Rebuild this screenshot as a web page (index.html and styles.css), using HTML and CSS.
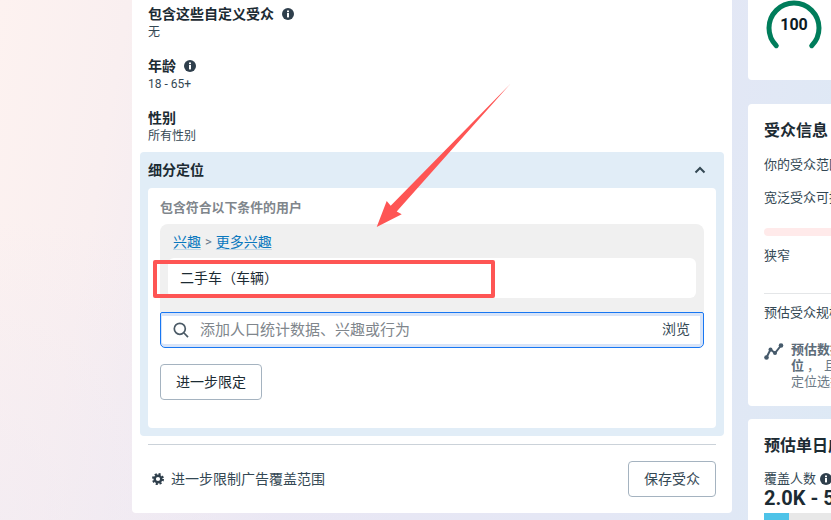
FILE: index.html
```html
<!DOCTYPE html>
<html lang="zh">
<head>
<meta charset="utf-8">
<title>受众</title>
<link rel="stylesheet" href="styles.css">
</head>
<body>
<div class="page">
  <main class="left-card">
    <div class="field">
      <div class="field-title">包含这些自定义受众
        <svg class="info" viewBox="0 0 12 12"><circle cx="6" cy="6" r="6"/><rect class="info-i" x="5" y="5" width="2" height="4.4"/><rect class="info-i" x="5" y="2.5" width="2" height="1.7"/></svg>
      </div>
      <div class="field-value">无</div>
    </div>
    <div class="field">
      <div class="field-title">年龄
        <svg class="info" viewBox="0 0 12 12"><circle cx="6" cy="6" r="6"/><rect class="info-i" x="5" y="5" width="2" height="4.4"/><rect class="info-i" x="5" y="2.5" width="2" height="1.7"/></svg>
      </div>
      <div class="field-value">18 - 65+</div>
    </div>
    <div class="field">
      <div class="field-title">性别</div>
      <div class="field-value">所有性别</div>
    </div>

    <section class="targeting">
      <header class="targeting-head">
        <span class="targeting-name">细分定位</span>
        <svg class="chevron" viewBox="0 0 12 8"><path d="M1.5 6.5 6 2l4.500 4.500"/></svg>
      </header>
      <div class="targeting-body">
        <div class="targeting-label">包含符合以下条件的用户</div>
        <div class="group">
          <div class="crumb"><a>兴趣</a><span class="crumb-sep">&gt;</span><a>更多兴趣</a></div>
          <div class="tag">二手车（车辆）</div>
        </div>
        <div class="search">
          <svg class="search-icon" viewBox="0 0 16 16"><circle cx="6.800" cy="6.800" r="5.500"/><path d="M11 11l4 4.200"/></svg>
          <span class="search-text">添加人口统计数据、兴趣或行为</span>
          <span class="browse">浏览</span>
        </div>
        <button class="btn narrow-btn">进一步限定</button>
      </div>
    </section>

    <div class="divider"></div>
    <footer class="left-foot">
      <div class="limit">
        <svg class="gear" viewBox="0 0 12 12"><circle cx="6" cy="6" r="3.300"/><circle class="gear-teeth" cx="6" cy="6" r="5"/></svg>
        <span>进一步限制广告覆盖范围</span>
      </div>
      <button class="btn save-btn">保存受众</button>
    </footer>
  </main>

  <aside class="right-col">
    <section class="card gauge-card">
      <div class="gauge">
        <svg viewBox="0 0 56 50"><path d="M10.300 45.700A25 25 0 1 1 45.700 45.700"/></svg>
        <span class="gauge-num">100</span>
      </div>
    </section>
    <section class="card info-card">
      <h2 class="card-title">受众信息</h2>
      <p class="line line-a">你的受众范围很宽泛</p>
      <p class="line line-b">宽泛受众可接触更多用户</p>
      <div class="meter"></div>
      <p class="line line-c">狭窄</p>
      <div class="card-rule"></div>
      <p class="line line-d">预估受众规模</p>
      <div class="note">
        <svg class="trend" viewBox="0 0 20 18"><path d="M2.500 14.500 6.500 6.500 11 10 17 2.500"/><circle cx="2.500" cy="14.500" r="2.300"/><circle cx="6.500" cy="6.500" r="2"/><circle cx="11" cy="10" r="2"/><circle cx="17" cy="2.500" r="2.300"/></svg>
        <div class="note-text"><b>预估数据</b><br><b>位</b><span class="note-comma">，</span>且可能<br>定位选择</div>
      </div>
    </section>
    <section class="card reach-card">
      <h2 class="card-title">预估单日成效</h2>
      <div class="reach-label">覆盖人数
        <svg class="info info-small" viewBox="0 0 12 12"><circle cx="6" cy="6" r="6"/><rect class="info-i" x="5" y="5" width="2" height="4.400"/><rect class="info-i" x="5" y="2.500" width="2" height="1.700"/></svg>
      </div>
      <div class="reach-num">2.0K - 5.8K</div>
      <div class="reach-bar"><div class="reach-fill"></div></div>
    </section>
  </aside>
</div>

<div class="red-box"></div>
<svg class="arrow" viewBox="0 0 831 520"><polygon points="510.300,84 396.700,211.400 401.700,214.300 376.700,226.900 386.700,201 390.700,205.800"/></svg>
</body>
</html>
```
FILE: styles.css
```css
* { box-sizing: border-box; }
html, body { margin: 0; padding: 0; height: 100%; overflow: hidden; }
body {
  font-family: Roboto, "Noto Sans CJK SC", sans-serif;
  color: #1c2b33;
  background:
    radial-gradient(420px 300px at 0 520px, rgba(236,232,244,.45), rgba(236,232,244,0)),
    linear-gradient(100deg, #fdf2f0 0%, #f9eff0 14%, #e9e7f4 40%, #e4e7f5 75%, #dde9f5 100%);
  position: relative;
}
.page { display: flex; gap: 16px; width: 831px; height: 520px; padding-left: 132px; overflow: hidden; align-items: flex-start; }

.left-card { flex: none; width: 600px; height: 513px; background: #fff; border-radius: 0 0 4px 4px; padding-top: 5px; }
.field { padding: 0 16px; margin-bottom: 18px; }
.field:nth-child(3) { margin-bottom: 9px; }
.field-title { font-size: 14px; font-weight: 700; line-height: 18px; display: flex; align-items: center; gap: 8px; }
.field-value { font-size: 12px; line-height: 16px; padding-top: 1px; height: 16px; color: #344854; }
.info { width: 12px; height: 12px; flex: none; fill: #2f3f4c; }
.info-i { fill: #fff; }

.targeting { margin: 0 8px; background: #e1edf7; border-radius: 4px; padding: 0 8px 8px; }
.targeting-head { height: 36px; display: flex; align-items: center; justify-content: space-between; font-size: 14px; font-weight: 700; }
.targeting-name { padding-bottom: 2px; }
.chevron { width: 12px; height: 8px; margin-right: 10px; fill: none; stroke: #344854; stroke-width: 2; }
.targeting-body { background: #fff; border-radius: 4px; height: 240px; padding: 11px 12px 0; }
.targeting-label { font-size: 12.900px; font-weight: 700; line-height: 18px; color: #80868c; margin-bottom: 7px; }
.group { background: #f0f0f0; border-radius: 8px 8px 0 0; height: 88px; }
.crumb { height: 34px; padding-left: 13px; display: flex; align-items: center; gap: 4px; font-size: 14px; color: #0a78be; }
.crumb a { text-decoration: underline; text-decoration-thickness: 1px; text-underline-offset: 2px; text-decoration-color: rgba(10,120,190,.2); }
.crumb-sep { color: #67788a; font-size: 13px; }
.tag { height: 40px; margin: 0 8px; background: #fff; border-radius: 6px; padding: 0 0 3px 12px; display: flex; align-items: center; font-size: 14px; }

.search { height: 36px; border: 1px solid #1877f2; border-radius: 2px 2px 5px 5px; box-shadow: inset 0 3px 0 #d8e4f8, inset 0 -3px 0 #d8e4f8, inset -3px 0 0 #d8e4f8, inset 1px 0 0 #d8e4f8; display: flex; align-items: center; padding: 0 12px; background: #fff; }
.search-icon { width: 16px; height: 16px; flex: none; fill: none; stroke: #4b5a66; stroke-width: 1.700; margin-right: 11px; }
.search-text { flex: 1; font-size: 15px; color: #80868c; padding-bottom: 4px; }
.browse { font-size: 14px; color: #344854; padding-bottom: 4px; margin-right: 1px; }

.btn { display: block; background: #fff; border: 1px solid #a5b3c0; border-radius: 4px; height: 36px; padding: 0 0 2px; font: inherit; font-size: 14px; color: #1c2b33; }
.narrow-btn { width: 102px; margin-top: 16px; }
.save-btn { width: 88px; color: #344854; }

.divider { height: 1px; background: #cbd2d9; margin: 8px 16px 16px; }
.left-foot { display: flex; justify-content: space-between; align-items: center; padding: 0 16px 0 20px; }
.limit { display: flex; align-items: center; gap: 7px; font-size: 14px; color: #344854; }
.limit span { padding-bottom: 2px; }
.gear { width: 12px; height: 12px; fill: none; stroke: #2f3f4c; stroke-width: 2.400; }
.gear-teeth { stroke-width: 2; stroke-dasharray: 2.100 1.827; }

.right-col { flex: none; width: 200px; display: flex; flex-direction: column; }
.card { background: #fff; border-radius: 4px; overflow: hidden; padding: 0 16px; }
.gauge-card { height: 80px; border-radius: 0 0 4px 4px; padding: 0; }
.gauge { position: relative; width: 56px; height: 50px; margin-left: 18px; }
.gauge svg { display: block; width: 56px; height: 50px; fill: none; stroke: #007d5b; stroke-width: 5; stroke-linecap: round; }
.gauge-num { position: absolute; top: 14px; left: 0; right: 0; text-align: center; font-size: 16px; font-weight: 700; line-height: 22px; color: #0b1a24; }

.info-card { height: 302px; margin-top: 24px; padding-top: 15px; }
.card-title { margin: 0; font-size: 16px; font-weight: 700; line-height: 24px; white-space: nowrap; }
.line { margin: 0; font-size: 13px; line-height: 18px; white-space: nowrap; color: #344854; }
.line-a { margin-top: 13px; }
.line-b { margin-top: 15px; }
.meter { width: 100%; height: 8px; margin-top: 21px; background: #ffeaea; border-radius: 4px 0 0 4px; }
.line-c { margin-top: 11px; }
.card-rule { height: 1px; background: #e4e6e8; margin-top: 28px; }
.line-d { margin-top: 10px; }
.note { display: flex; gap: 7px; margin-top: 20px; }
.trend { flex: none; width: 20px; height: 18px; margin-top: 1px; fill: #465a6b; stroke: #465a6b; stroke-width: 2; }
.trend circle { stroke: none; }
.trend path { fill: none; }
.note-text { font-size: 13px; line-height: 16px; color: #6c7a86; white-space: nowrap; }
.note-text b { font-weight: 700; color: #5d6c79; }
.note-comma { padding: 0 4px 0 3px; }

.reach-card { margin-top: 13px; height: 120px; padding-top: 15px; }
.reach-label { display: flex; align-items: center; gap: 4px; font-size: 13px; line-height: 18px; margin-top: 12px; color: #344854; }
.info-small { width: 12px; height: 12px; }
.reach-num { font-size: 20px; font-weight: 700; line-height: 22px; white-space: nowrap; color: #1c2b33; margin-top: -1px; }
.reach-bar { height: 8px; margin-top: 4px; background: #e8e8e8; }
.reach-fill { width: 25px; height: 100%; background: #4ec3e8; }

.red-box { position: absolute; left: 153px; top: 260px; width: 342px; height: 38px; border: 4px solid #fe5554; border-radius: 2px; }
.arrow { position: absolute; left: 0; top: 0; width: 831px; height: 520px; fill: #fe5554; pointer-events: none; }
```
